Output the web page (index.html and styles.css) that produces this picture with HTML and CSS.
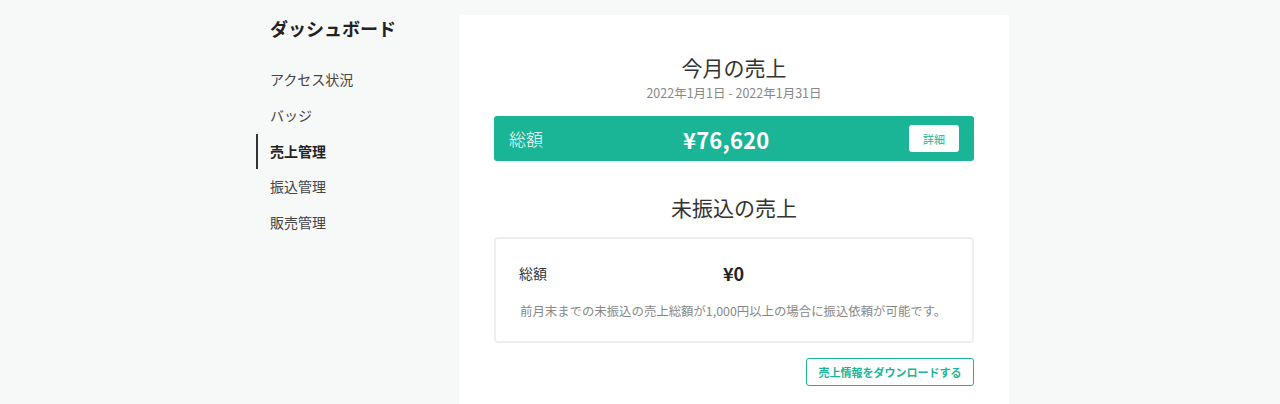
FILE: index.html
```html
<!DOCTYPE html>
<html lang="ja">
<head>
<meta charset="utf-8">
<link rel="stylesheet" href="styles.css">
</head>
<body>
<div class="layout">
  <aside class="sidebar">
    <h1 class="side-title">ダッシュボード</h1>
    <nav class="nav">
      <a class="nav-item">アクセス状況</a>
      <a class="nav-item">バッジ</a>
      <a class="nav-item active">売上管理</a>
      <a class="nav-item">振込管理</a>
      <a class="nav-item">販売管理</a>
    </nav>
  </aside>
  <main class="card">
    <h2 class="section-title">今月の売上</h2>
    <p class="period">2022年1月1日 - 2022年1月31日</p>
    <div class="total-bar">
      <span class="bar-label">総額</span>
      <span class="bar-value">¥76,620</span>
      <button class="detail-btn">詳細</button>
    </div>
    <h2 class="section-title second">未振込の売上</h2>
    <div class="unpaid-box">
      <div class="unpaid-row">
        <span class="unpaid-label">総額</span>
        <span class="unpaid-value">¥0</span>
      </div>
      <p class="note">前月末までの未振込の売上総額が1,000円以上の場合に振込依頼が可能です。</p>
    </div>
    <div class="actions">
      <button class="download-btn">売上情報をダウンロードする</button>
    </div>
  </main>
</div>
</body>
</html>
```

FILE: styles.css
```css
* { box-sizing: border-box; }
html, body { margin: 0; padding: 0; }
body {
  background: #f7f8f8;
  font-family: "Noto Sans CJK JP", "Noto Sans", sans-serif;
  color: #333;
  height: 404px;
  overflow: hidden;
}
.layout {
  display: flex;
  padding-left: 256px;
  padding-top: 15px;
}
.sidebar {
  width: 203px;
  flex: none;
}
.side-title {
  margin: 0 0 21px 14px;
  font-size: 18px;
  line-height: 26px;
  font-weight: 700;
  color: #222;
}
.nav { display: flex; flex-direction: column; }
.nav-item {
  display: block;
  height: 35.75px;
  line-height: 35.75px;
  padding-left: 12px;
  font-size: 14px;
  color: #444;
  border-left: 2px solid transparent;
}
.nav-item.active {
  border-left-color: #333;
  font-weight: 700;
  color: #222;
}
.card {
  width: 550px;
  height: 389px;
  background: #fff;
  border-radius: 3px 3px 0 0;
  padding: 36px 35px 0;
}
.section-title {
  margin: 0;
  text-align: center;
  font-size: 21px;
  line-height: 32px;
  font-weight: 400;
  color: #333;
}
.section-title.second { margin-top: 30px; }
.period {
  margin: 0;
  text-align: center;
  font-size: 12.5px;
  line-height: 20px;
  color: #888;
}
.total-bar {
  margin-top: 13px;
  height: 45px;
  background: #1ab596;
  border-radius: 3px;
  display: flex;
  align-items: center;
  padding: 0 15px;
  color: #fff;
}
.bar-label {
  width: 174px;
  font-size: 17px;
  font-weight: 300;
}
.bar-value {
  font-size: 22px;
  font-weight: 700;
  letter-spacing: 0.2px;
}
.detail-btn {
  margin-left: auto;
  width: 50px;
  height: 27px;
  border: none;
  border-radius: 3px;
  background: #fff;
  color: #1ab596;
  font-family: inherit;
  font-size: 11px;
  padding: 0;
}
.unpaid-box {
  margin-top: 14px;
  border: 2px solid #eeeeee;
  border-radius: 4px;
  padding: 22px 10px 20px 23px;
}
.unpaid-row {
  display: flex;
  align-items: center;
  height: 24px;
}
.unpaid-label {
  width: 204px;
  font-size: 14px;
  color: #333;
}
.unpaid-value {
  font-size: 18px;
  font-weight: 700;
  color: #222;
}
.note {
  margin: 16px 0 0 1px;
  font-size: 12.4px;
  line-height: 20px;
  color: #888;
  white-space: nowrap;
}
.actions {
  display: flex;
  justify-content: flex-end;
  margin-top: 15px;
}
.download-btn {
  height: 28px;
  width: 168px;
  border: 1px solid #1ab596;
  border-radius: 3px;
  background: #fff;
  color: #1ab596;
  font-family: inherit;
  font-size: 11px;
  font-weight: 700;
  padding: 0;
}
```
